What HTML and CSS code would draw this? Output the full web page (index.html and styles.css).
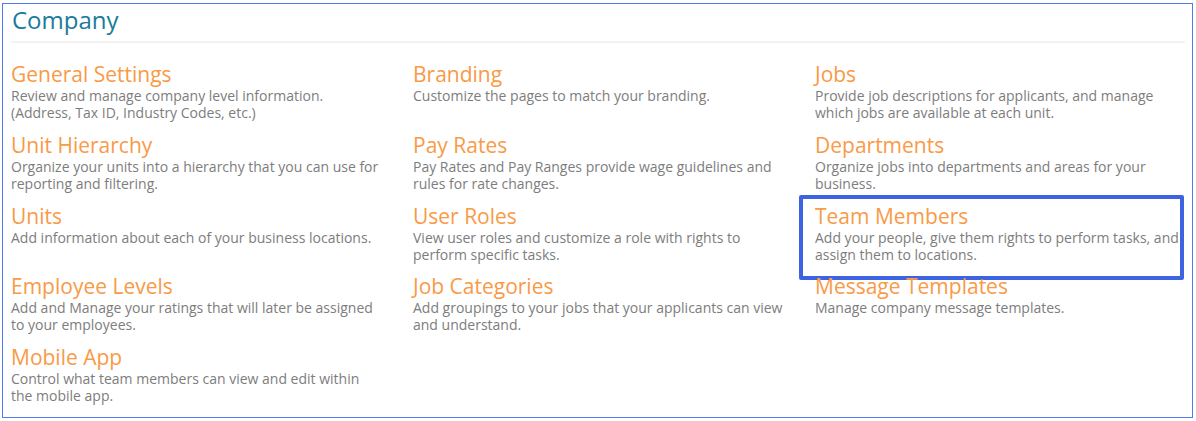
FILE: index.html
```html
<!DOCTYPE html>
<html lang="en">
<head>
  <meta charset="UTF-8" />
  <title>Company</title>
  <link rel="stylesheet" href="styles.css">
</head>
<body>
  <div class="frame">
    <h1>Company</h1>

    <div class="settings">
      <div class="item">
        <a href="#">General Settings</a>
        <p>Review and manage company level information.<br>(Address, Tax ID, Industry Codes, etc.)</p>
      </div>
      <div class="item">
        <a href="#">Unit Hierarchy</a>
        <p>Organize your units into a hierarchy that you can use for reporting and filtering.</p>
      </div>
      <div class="item">
        <a href="#">Units</a>
        <p>Add information about each of your business locations.</p>
      </div>
      <div class="item">
        <a href="#">Employee Levels</a>
        <p>Add and Manage your ratings that will later be assigned to your employees.</p>
      </div>
      <div class="item">
        <a href="#">Mobile App</a>
        <p>Control what team members can view and edit within the mobile app.</p>
      </div>

      <div class="item">
        <a href="#">Branding</a>
        <p>Customize the pages to match your branding.</p>
      </div>
      <div class="item">
        <a href="#">Pay Rates</a>
        <p>Pay Rates and Pay Ranges provide wage guidelines and rules for rate changes.</p>
      </div>
      <div class="item">
        <a href="#">User Roles</a>
        <p>View user roles and customize a role with rights to perform specific tasks.</p>
      </div>
      <div class="item">
        <a href="#">Job Categories</a>
        <p>Add groupings to your jobs that your applicants can view and understand.</p>
      </div>
      <div class="item empty"></div>

      <div class="item">
        <a href="#">Jobs</a>
        <p>Provide job descriptions for applicants, and manage which jobs are available at each unit.</p>
      </div>
      <div class="item">
        <a href="#">Departments</a>
        <p>Organize jobs into departments and areas for your business.</p>
      </div>
      <div class="item highlight">
        <a href="#">Team Members</a>
        <p>Add your people, give them rights to perform tasks, and assign them to locations.</p>
      </div>
      <div class="item">
        <a href="#">Message Templates</a>
        <p>Manage company message templates.</p>
      </div>
      <div class="item empty"></div>
    </div>
  </div>
</body>
</html>
```

FILE: styles.css
```css
body {
  margin: 0;
  font-family: 'Open Sans', sans-serif;
  background-color: #fff;
  color: #777;
}

.frame {
  margin: 3px 3px 3px 2px;
  border: 1.5px solid #4d7cf2;
  padding: 0 7px 0 8px;
  box-sizing: border-box;
  height: 415px;
}

h1 {
  margin: 0;
  padding: 0 0 5px 1px;
  font-size: 24px;
  font-weight: normal;
  color: #1b7b9b;
  line-height: 32px;
  border-bottom: 2px solid #f2f2f2;
}

.settings {
  display: grid;
  grid-template-columns: repeat(3, 402px);
  grid-template-rows: repeat(5, 70.75px);
  grid-auto-flow: column;
  margin-top: 18px;
}

.item {
  position: relative;
  padding-right: 32px;
}

.item a {
  display: block;
  font-size: 21px;
  line-height: 26px;
  color: #f99a46;
  text-decoration: none;
}

.item p {
  margin: 0;
  font-size: 14px;
  line-height: 17.2px;
  color: #7d7d7d;
}

.highlight::after {
  content: "";
  position: absolute;
  left: -16px;
  top: -8px;
  width: 385px;
  height: 85px;
  border: 4px solid #3e63e2;
  border-radius: 2px;
  box-sizing: border-box;
}
```
